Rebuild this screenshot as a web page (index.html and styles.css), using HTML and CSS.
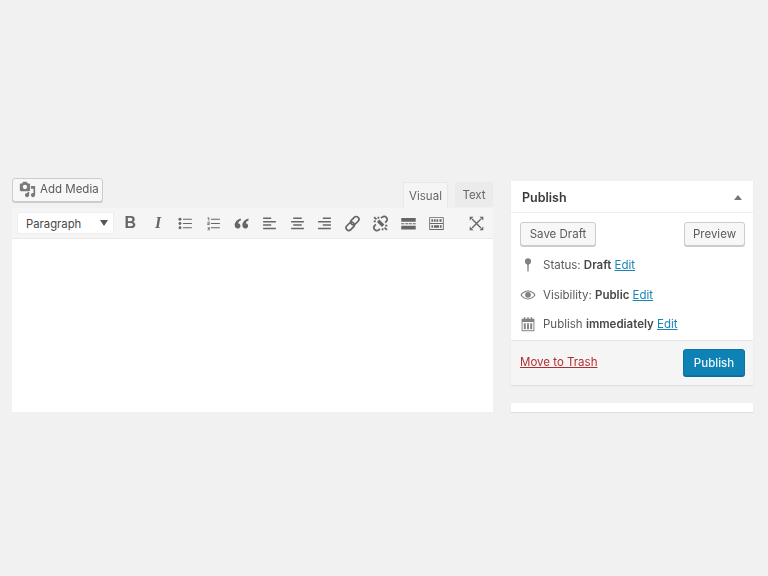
FILE: index.html
```html
<!DOCTYPE html>
<html lang="en">
<head>
<meta charset="utf-8">
<title>Edit Post</title>
<link rel="stylesheet" href="styles.css">
</head>
<body>
<main class="page">
  <section class="editor">
    <div class="editor-head">
      <button class="btn media-btn" type="button">
        <svg class="media-icon" viewBox="0 0 20 20"><path d="M13 11V4c0-.55-.45-1-1-1h-1.67L9 1H5L3.67 3H2c-.55 0-1 .45-1 1v7c0 .55.45 1 1 1h10c.55 0 1-.45 1-1zM7 4.500c1.380 0 2.500 1.120 2.500 2.500S8.380 9.500 7 9.500 4.500 8.380 4.500 7 5.620 4.500 7 4.500zM14 6h5v10.500c0 1.380-1.120 2.500-2.500 2.500S14 17.880 14 16.500s1.120-2.500 2.500-2.500c.17 0 .34.02.5.05V9h-3V6zm-4 8.050V13h2v3.500c0 1.380-1.120 2.500-2.500 2.500S7 17.880 7 16.500 8.120 14 9.500 14c.17 0 .34.02.5.05z"/></svg>
        <span>Add Media</span>
      </button>
      <div class="tabs">
        <span class="tab tab-active">Visual</span>
        <span class="tab">Text</span>
      </div>
    </div>
    <div class="toolbar">
      <div class="format">Paragraph<span class="caret"></span></div>
      <span class="tool glyph-b">B</span>
      <span class="tool glyph-i">I</span>
      <span class="tool"><svg viewBox="0 0 20 20"><circle cx="3.500" cy="5" r="1.700"/><circle cx="3.500" cy="10" r="1.700"/><circle cx="3.500" cy="15" r="1.700"/><path d="M7 4.400h10.500v1.200H7zM7 9.400h10.500v1.200H7zM7 14.400h10.500v1.200H7z"/></svg></span>
      <span class="tool"><svg viewBox="0 0 20 20"><path d="M3 3h2v3.500H4V4H3zM2.800 8h2.700v2.300H4v.7h1.500v.8H2.800V9.800h1.700V8.800H2.800zM2.800 14h2.700v4H2.800v-.8h1.700v-.8H3.500v-.8h1v-.8H2.800zM7 4.400h10.500v1.200H7zM7 9.400h10.500v1.200H7zM7 14.400h10.500v1.200H7z"/></svg></span>
      <span class="tool"><svg viewBox="0 0 20 20"><path d="M9 4C5 5.300 2 8.200 2 11.800 2 14.200 3.400 16 5.500 16c1.800 0 3.300-1.400 3.300-3.100 0-1.700-1.200-3-2.900-3.100.5-1.500 1.700-2.700 3.600-3.600zM18 4c-4 1.300-7 4.200-7 7.800 0 2.400 1.400 4.200 3.500 4.200 1.800 0 3.300-1.400 3.300-3.100 0-1.700-1.200-3-2.900-3.100.5-1.500 1.700-2.700 3.600-3.600z"/></svg></span>
      <span class="tool"><svg viewBox="0 0 20 20"><path d="M2.500 3h9.500v1.700H2.500zM2.500 7h15v1.700h-15zM2.500 11h9.500v1.700H2.500zM2.500 15h15v1.700h-15z"/></svg></span>
      <span class="tool"><svg viewBox="0 0 20 20"><path d="M5 3h10v1.700H5zM2.500 7h15v1.700h-15zM5 11h10v1.700H5zM2.500 15h15v1.700h-15z"/></svg></span>
      <span class="tool"><svg viewBox="0 0 20 20"><path d="M8 3h9.500v1.700H8zM2.500 7h15v1.700h-15zM8 11h9.500v1.700H8zM2.500 15h15v1.700h-15z"/></svg></span>
      <span class="tool"><svg class="stroke" viewBox="0 0 20 20"><rect x="9.500" y="1.200" width="6.400" height="11" rx="3.200" transform="rotate(45 12.700 6.700)"/><rect x="4.100" y="7.800" width="6.400" height="11" rx="3.200" transform="rotate(45 7.300 13.300)"/></svg></span>
      <span class="tool"><svg class="stroke" viewBox="0 0 20 20"><path d="M10.500 3.800l1.500-1.300c1.500-1.200 3.500-1.100 4.800.2 1.300 1.400 1.300 3.400.1 4.800L15.500 9M9.500 16.200 8 17.500c-1.500 1.200-3.500 1.100-4.800-.2-1.300-1.400-1.300-3.400-.1-4.800L4.500 11M6.500 7.500l6 6M7.800 6l6 6M2.500 2.500 5.200 5.200M2 7.500h2.500M7.500 2v2.500M17.500 17.500l-2.700-2.700M18 12.500h-2.500M12.500 18v-2.500"/></svg></span>
      <span class="tool"><svg viewBox="0 0 20 20"><path d="M1.500 3.500h17V8h-17zM1.500 12.500h17V17h-17zM1.500 9.600h3.500v1.300H1.500zM6.200 9.600h3.500v1.300H6.200zM10.500 9.600h3.500v1.300h-3.500zM15 9.600h3.500v1.300H15z"/></svg></span>
      <span class="tool"><svg viewBox="0 0 20 20"><path fill-rule="evenodd" d="M1.500 2.500h17v15h-17zM2.500 3.500v6h15v-6zM2.500 10.500v6h15v-6z"/><path d="M4 5h2v3H4zM7 5h2v3H7zM10 5h2v3h-2zM13.500 5H16v3h-2.500zM4 12h2v3H4zM7 12h6v3H7zM14 12h2v3h-2z"/></svg></span>
      <span class="tool tool-end"><svg viewBox="0 0 20 20"><path d="M2 2h4.500L2 6.500zM18 2v4.500L13.500 2zM2 18v-4.500L6.500 18zM18 18h-4.500l4.500-4.500z"/><path d="M4.200 5.300 5.300 4.200 10 8.900l4.700-4.700 1.100 1.100-4.700 4.700 4.700 4.700-1.100 1.100-4.700-4.700-4.700 4.700-1.100-1.100L8.900 10z"/></svg></span>
    </div>
    <div class="editor-body"></div>
  </section>

  <aside class="side">
    <section class="box">
      <header class="box-head"><h2>Publish</h2><span class="collapse"></span></header>
      <div class="actions">
        <button class="btn btn-draft" type="button">Save Draft</button>
        <button class="btn btn-preview" type="button">Preview</button>
      </div>
      <div class="misc">
        <div class="row">
          <span class="row-icon"><svg viewBox="0 0 20 20"><circle cx="10" cy="5.500" r="3.800"/><path d="M9 8h2l-.3 10H9.300z"/></svg></span>
          <span>Status: <b>Draft</b> <a href="#">Edit</a></span>
        </div>
        <div class="row">
          <span class="row-icon"><svg viewBox="0 0 20 20"><path fill-rule="evenodd" d="M10 4.500c4 0 7.500 2.200 9.500 5.500-2 3.300-5.500 5.500-9.500 5.500S2.500 13.300.5 10C2.500 6.700 6 4.500 10 4.500zM2.200 10c1.800 2.600 4.600 4.300 7.800 4.300s6-1.700 7.800-4.300c-1.800-2.600-4.600-4.300-7.800-4.300S4 7.400 2.200 10z"/><circle cx="10" cy="9.800" r="3.600"/></svg></span>
          <span>Visibility: <b>Public</b> <a href="#">Edit</a></span>
        </div>
        <div class="row">
          <span class="row-icon"><svg viewBox="0 0 20 20"><path fill-rule="evenodd" d="M2 3.500h16V19H2zM3.200 7.500v10.300h13.600V7.500z"/><path d="M4.800 1.500h1.900v3.500H4.800zM9 1.500h2v3.500H9zM13.300 1.500h1.900v3.500h-1.900zM4.800 9h2.400v7.500H4.800zM8.800 9h2.400v7.500H8.800zM12.800 9h2.400v7.500h-2.400z"/></svg></span>
          <span>Publish <b>immediately</b> <a href="#">Edit</a></span>
        </div>
      </div>
      <footer class="box-foot">
        <a class="trash" href="#">Move to Trash</a>
        <button class="btn btn-primary" type="button">Publish</button>
      </footer>
    </section>
    <section class="box box-next"></section>
  </aside>
</main>
</body>
</html>
```
FILE: styles.css
```css
* { box-sizing: border-box; }
html, body { margin: 0; height: 100%; }
body {
  background: #f1f1f1;
  color: #5a5a5a;
  font-family: Inter, sans-serif;
  font-size: 11.5px;
  overflow: hidden;
}
.page {
  display: flex;
  align-items: flex-start;
  gap: 18px;
  padding: 178px 15px 0 12px;
  filter: blur(0.55px);
}
.editor { width: 481px; flex: none; }
.side { width: 242px; flex: none; padding-top: 3px; }

.btn {
  display: inline-flex;
  align-items: center;
  justify-content: center;
  height: 24px;
  padding: 0;
  border: 1px solid #ccc;
  border-radius: 3px;
  background: #f7f7f7;
  box-shadow: 0 1px 0 #ccc;
  color: #5a5a5a;
  font: inherit;
}
.btn-draft { width: 76px; }
.btn-preview { width: 61px; }
.btn-primary {
  width: 62px;
  height: 27px;
  background: #0f82b5;
  border-color: #0b74a3;
  box-shadow: 0 1px 0 #0a6d99;
  color: #f1f7fb;
  font-weight: 500;
}

.editor-head {
  display: flex;
  justify-content: space-between;
  align-items: flex-start;
  height: 30px;
}
.media-btn { width: 91px; justify-content: flex-start; padding: 0 0 2px 6px; gap: 4px; }
.media-icon { width: 17px; height: 17px; fill: #7a7a7a; }
.tabs { display: flex; gap: 7px; padding-top: 4px; }
.tab {
  display: flex;
  align-items: center;
  justify-content: center;
  width: 38px;
  height: 25px;
  background: #ebebeb;
  color: #666;
}
.tab-active {
  width: 45px;
  height: 26px;
  background: #f5f5f5;
  border: 1px solid #e8e8e8;
  border-bottom: 0;
}

.toolbar {
  display: flex;
  align-items: center;
  height: 31px;
  padding: 0 3px 0 5px;
  background: #f5f5f5;
  border-bottom: 1px solid #e9e9e9;
}
.format {
  position: relative;
  width: 97px;
  height: 22px;
  margin-right: 2.5px;
  padding-left: 8px;
  background: #fff;
  border: 1px solid #eee;
  color: #484848;
  font-size: 11.3px;
  line-height: 22px;
}
.caret {
  position: absolute;
  right: 5px;
  top: 7px;
  border: 4px solid transparent;
  border-top: 6px solid #555;
  border-bottom: 0;
}
.tool {
  display: flex;
  align-items: center;
  justify-content: center;
  width: 27.8px;
  height: 24px;
  flex: none;
  color: #666;
}
.tool svg { width: 17px; height: 17px; fill: #666; }
.tool .stroke { fill: none; stroke: #666; stroke-width: 2; }
.tool-end { margin-left: auto; }
.glyph-b { font: bold 16px "Liberation Sans", sans-serif; }
.glyph-i { font: italic bold 16px "Liberation Serif", serif; }

.editor-body { height: 173px; background: #fff; }

.box { background: #fff; box-shadow: 0 1px 1px rgba(0,0,0,.07); }
.box-head {
  display: flex;
  justify-content: space-between;
  align-items: center;
  height: 32px;
  padding: 1px 11px 0;
  border-bottom: 1px solid #eee;
}
.box-head h2 { margin: 0; font-size: 12.5px; font-weight: 600; color: #3a3a3a; }
.collapse {
  border: 4px solid transparent;
  border-bottom: 5px solid #777;
  border-top: 0;
}
.actions { display: flex; justify-content: space-between; padding: 9px 8px 0 9px; }
.misc { padding: 4.3px 9px 1.7px; }
.row { display: flex; align-items: center; gap: 7px; height: 29.5px; }
.row b { color: #484848; font-weight: 600; }
.row a { color: #1a84b5; }
.row-icon { display: flex; width: 16px; flex: none; }
.row-icon svg { width: 16px; height: 16px; fill: #828282; }
.box-foot {
  display: flex;
  justify-content: space-between;
  align-items: flex-start;
  height: 45px;
  padding: 8px 8px 0 9px;
  background: #f5f5f5;
  border-top: 1px solid #e5e5e5;
}
.trash { color: #b32d2e; margin-top: 6px; }
.box-next { height: 9px; margin-top: 18px; }
```
